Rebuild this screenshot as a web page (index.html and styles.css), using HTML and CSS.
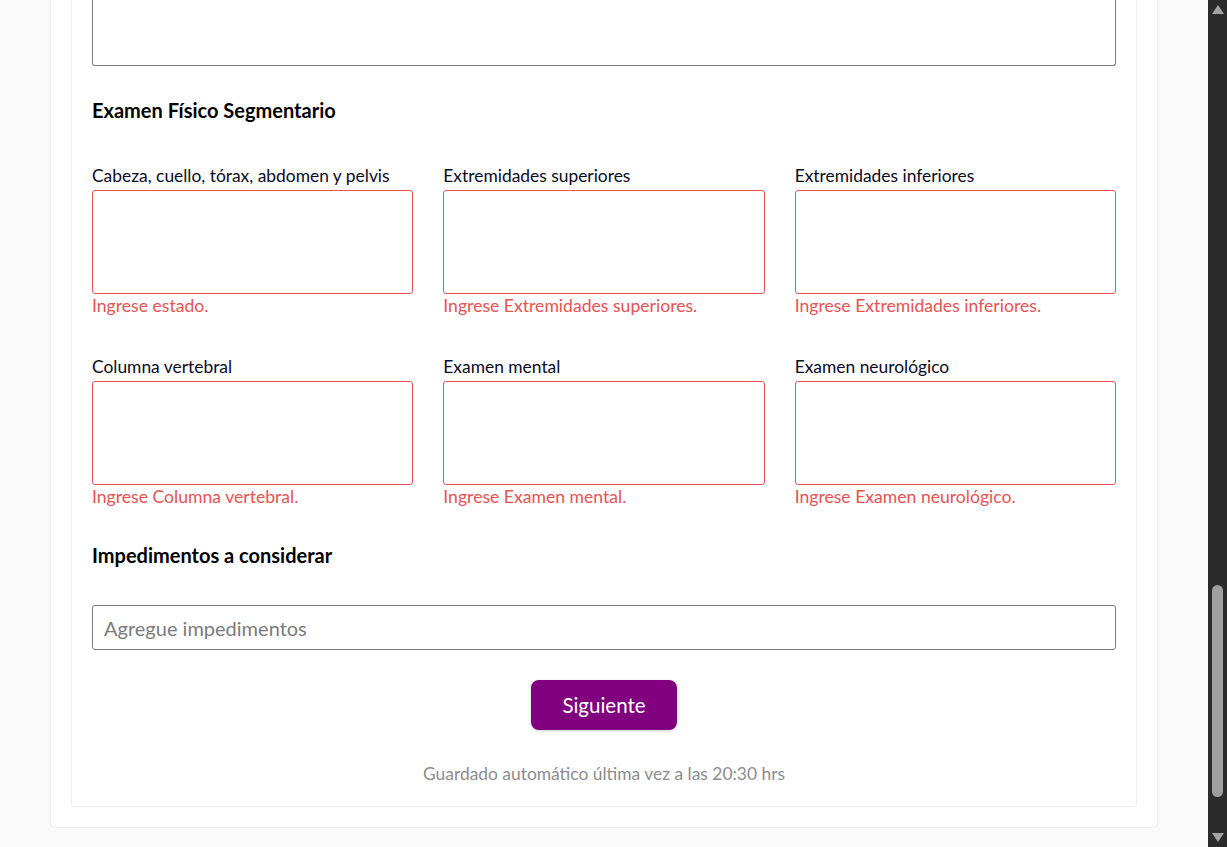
FILE: index.html
```html
<!DOCTYPE html>
<html lang="es">
<head>
<meta charset="utf-8">
<title>Examen físico</title>
<link rel="stylesheet" href="styles.css">
</head>
<body>
<div class="page">
  <main class="main">
    <div class="outer-card">
      <div class="inner-card">
        <div class="textarea-tail"></div>

        <h2 class="section-title">Examen Físico Segmentario</h2>

        <div class="grid">
          <div class="field">
            <label class="label">Cabeza, cuello, tórax, abdomen y pelvis</label>
            <textarea class="area invalid"></textarea>
            <div class="error">Ingrese estado.</div>
          </div>
          <div class="field">
            <label class="label">Extremidades superiores</label>
            <textarea class="area invalid"></textarea>
            <div class="error">Ingrese Extremidades superiores.</div>
          </div>
          <div class="field">
            <label class="label">Extremidades inferiores</label>
            <textarea class="area invalid"></textarea>
            <div class="error">Ingrese Extremidades inferiores.</div>
          </div>
          <div class="field">
            <label class="label">Columna vertebral</label>
            <textarea class="area invalid"></textarea>
            <div class="error">Ingrese Columna vertebral.</div>
          </div>
          <div class="field">
            <label class="label">Examen mental</label>
            <textarea class="area invalid"></textarea>
            <div class="error">Ingrese Examen mental.</div>
          </div>
          <div class="field">
            <label class="label">Examen neurológico</label>
            <textarea class="area invalid"></textarea>
            <div class="error">Ingrese Examen neurológico.</div>
          </div>
        </div>

        <h2 class="section-title second">Impedimentos a considerar</h2>

        <input class="text-input" type="text" placeholder="Agregue impedimentos">

        <div class="actions">
          <button class="btn" type="button">Siguiente</button>
        </div>

        <p class="saved">Guardado automático última vez a las 20:30 hrs</p>
      </div>
    </div>
  </main>
  <div class="scrollbar">
    <div class="arrow up"></div>
    <div class="track">
      <div class="thumb"></div>
    </div>
    <div class="arrow down"></div>
  </div>
</div>
</body>
</html>
```

FILE: styles.css
```css
* { box-sizing: border-box; }

html, body {
  margin: 0;
  padding: 0;
  height: 100%;
  overflow: hidden;
}

body {
  background: #fafafa;
  font-family: Lato, "Noto Sans", sans-serif;
  color: #000;
}

.page {
  display: flex;
  height: 100vh;
}

.main {
  flex: 1;
  padding: 0 50px 19px;
  display: flex;
  flex-direction: column;
  justify-content: flex-end;
}

.outer-card {
  background: #fff;
  border: 1px solid #eeeeee;
  border-top: none;
  border-radius: 0 0 4px 4px;
  padding: 0 20px 20px;
}

.inner-card {
  background: #fff;
  border: 1px solid #eeeeee;
  border-top: none;
  border-radius: 0 0 4px 4px;
  padding: 0 20px 20px;
}

.textarea-tail {
  height: 66px;
  border: 1px solid #7a7a7a;
  border-top: none;
  border-radius: 0 0 3px 3px;
}

.section-title {
  margin: 33px 0 0;
  font-size: 20px;
  line-height: 22px;
  font-weight: 700;
}

.section-title.second {
  margin-top: 35px;
}

.grid {
  display: grid;
  grid-template-columns: repeat(3, 1fr);
  column-gap: 30px;
  row-gap: 37px;
  margin-top: 43px;
}

.field {
  display: flex;
  flex-direction: column;
}

.label {
  font-size: 17.4px;
  line-height: 24px;
  margin-bottom: 2px;
  color: #0b0b1e;
}

.area {
  display: block;
  width: 100%;
  height: 104px;
  resize: none;
  border: 1px solid #7a7a7a;
  border-radius: 3px;
  font-family: inherit;
  font-size: 16px;
  background: #fff;
}

.area.invalid {
  border-color: #e55353;
}

.error {
  font-size: 17.6px;
  line-height: 24px;
  color: #e55353;
}

.text-input {
  display: block;
  width: 100%;
  height: 45px;
  margin-top: 39px;
  border: 1px solid #7a7a7a;
  border-radius: 3px;
  padding: 0 11px;
  font-family: inherit;
  font-size: 20px;
  color: #222;
  background: #fff;
}

.text-input::placeholder {
  color: #7b7b7b;
}

.actions {
  display: flex;
  justify-content: center;
  margin-top: 30px;
}

.btn {
  width: 146px;
  height: 50px;
  border: none;
  border-radius: 8px;
  background: #800080;
  color: #fff;
  font-family: inherit;
  font-size: 20.5px;
  box-shadow: 0 1px 3px rgba(0, 0, 0, 0.2);
  cursor: pointer;
}

.saved {
  margin: 32px 0 0;
  text-align: center;
  font-size: 17.4px;
  line-height: 24px;
  color: #8c8c8c;
}

.scrollbar {
  width: 19px;
  flex: none;
  background: #2b2b2b;
  display: flex;
  flex-direction: column;
  align-items: center;
}

.track {
  flex: 1;
  width: 100%;
  display: flex;
  flex-direction: column;
  justify-content: flex-end;
  align-items: center;
  padding-bottom: 36px;
}

.thumb {
  width: 11px;
  height: 212px;
  border-radius: 6px;
  background: #9f9f9f;
}

.arrow {
  width: 0;
  height: 0;
  border-left: 6px solid transparent;
  border-right: 6px solid transparent;
}

.arrow.up {
  margin-top: 5px;
  border-bottom: 9px solid #a3a3a3;
}

.arrow.down {
  margin-bottom: 5px;
  border-top: 9px solid #a3a3a3;
}
```
